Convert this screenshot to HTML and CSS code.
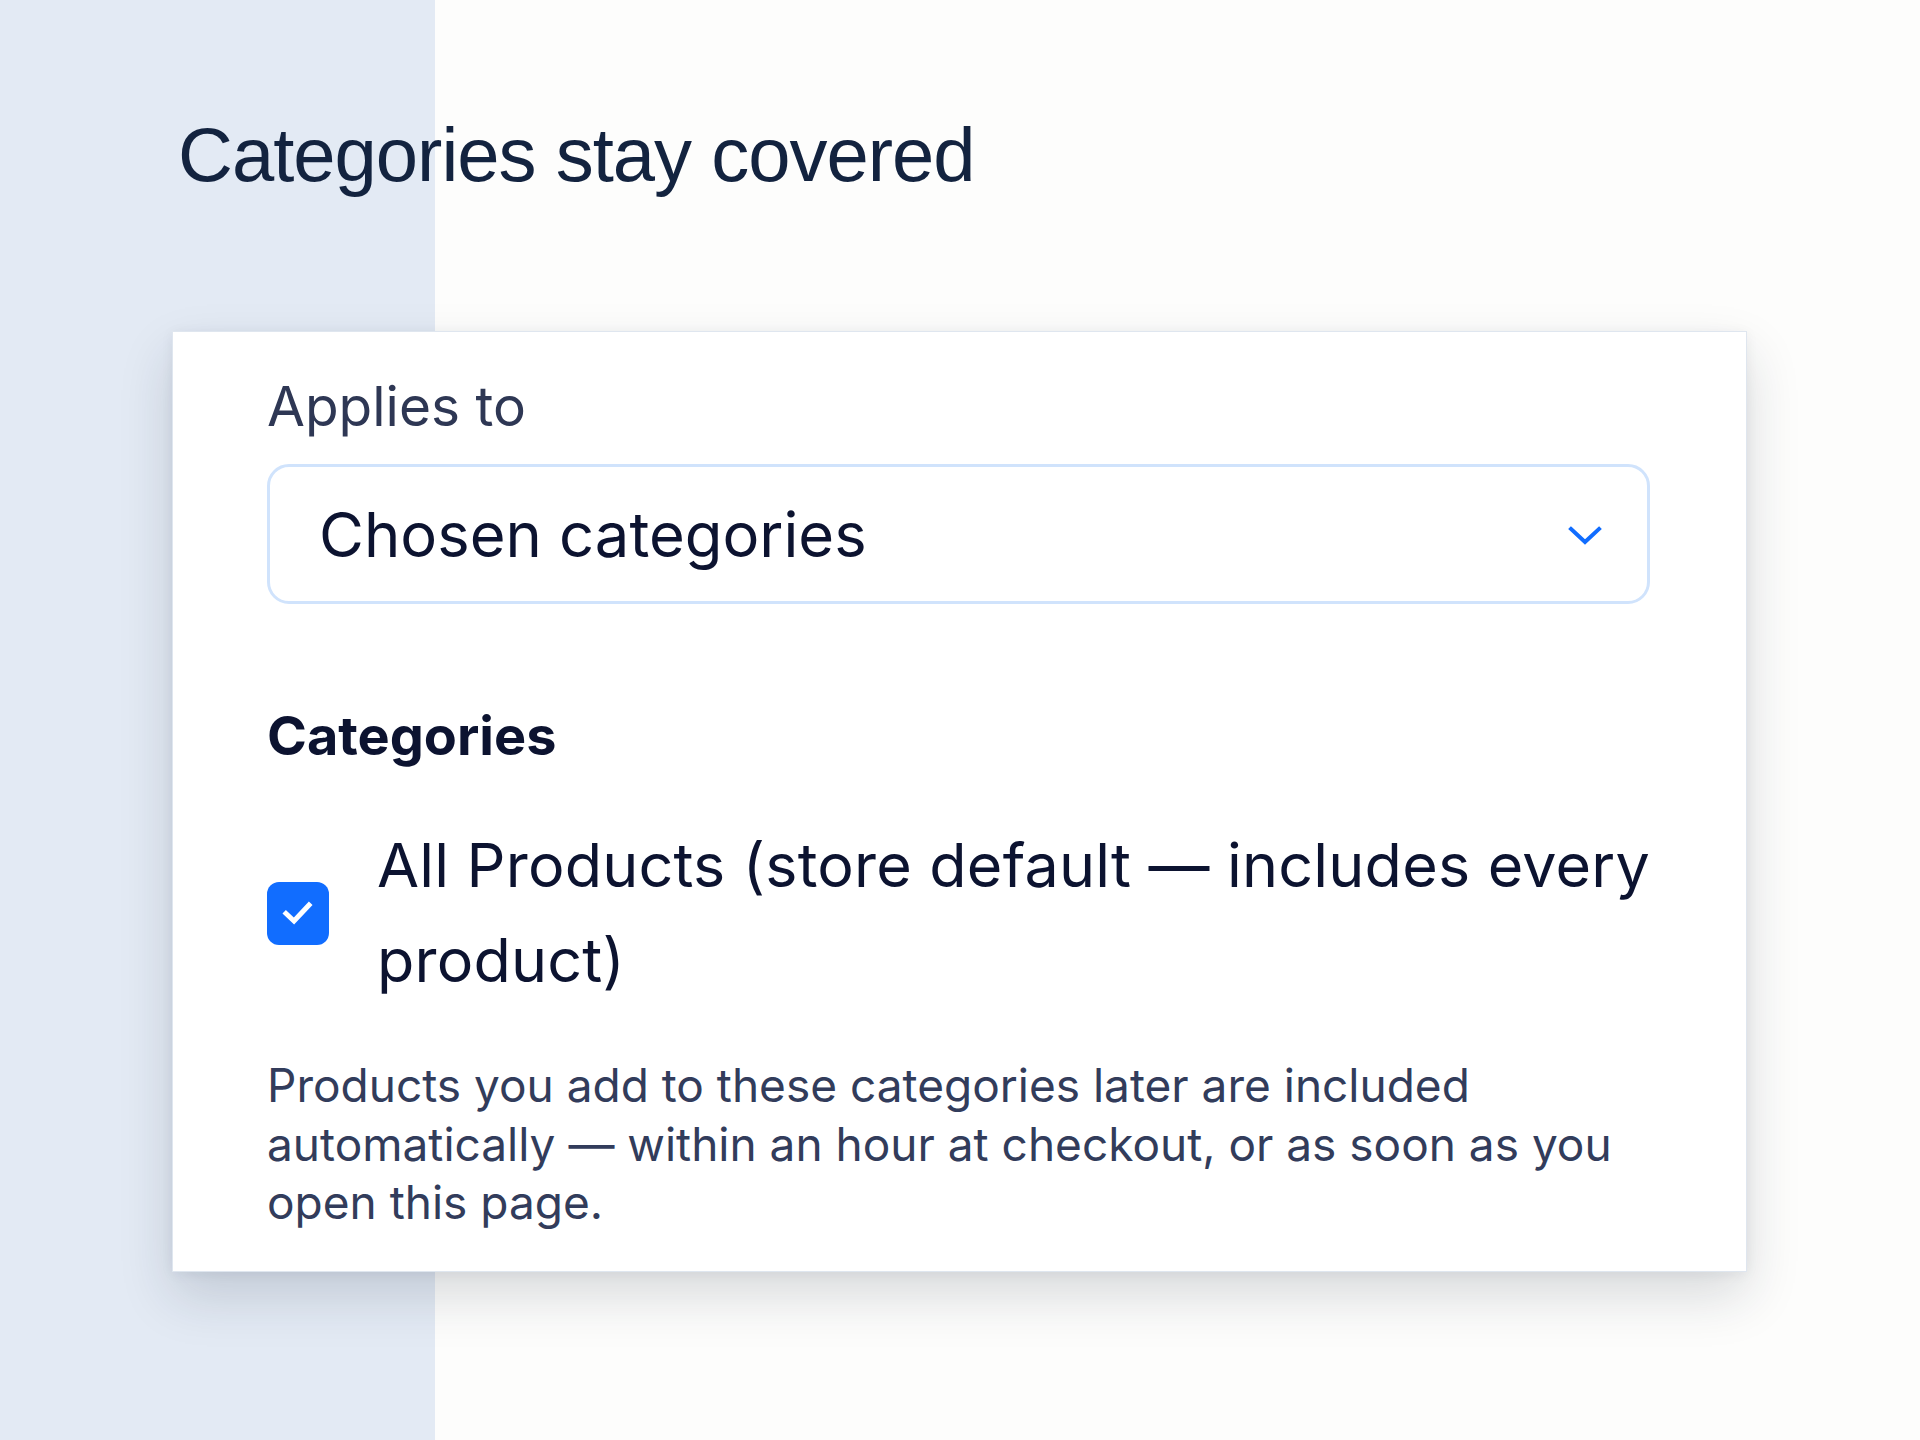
FILE: index.html
```html
<!DOCTYPE html>
<html lang="en">
<head>
<meta charset="utf-8">
<title>Categories stay covered</title>
<link rel="stylesheet" href="styles.css">
</head>
<body>
<div class="page">
  <h1 class="title">Categories stay covered</h1>
  <section class="card">
    <div class="field-label">Applies to</div>
    <div class="select">
      <span class="select-value">Chosen categories</span>
      <svg class="chevron" width="36" height="22" viewBox="0 0 36 22" aria-hidden="true">
        <path d="M4 4 L18 17 L32 4" fill="none" stroke="#116dff" stroke-width="4" stroke-linecap="square" stroke-linejoin="miter"/>
      </svg>
    </div>
    <h2 class="section-title">Categories</h2>
    <div class="option">
      <span class="checkbox">
        <svg width="34" height="28" viewBox="0 0 34 28" aria-hidden="true">
          <path d="M5 14.5 L13 22 L28 6" fill="none" stroke="#ffffff" stroke-width="5" stroke-linecap="square" stroke-linejoin="miter"/>
        </svg>
      </span>
      <span class="option-label">All Products (store default — includes every product)</span>
    </div>
    <p class="note">Products you add to these categories later are included automatically — within an hour at checkout, or as soon as you open this page.</p>
  </section>
</div>
</body>
</html>
```

FILE: styles.css
```css
html, body {
  margin: 0;
  padding: 0;
}

body {
  width: 1920px;
  min-height: 1440px;
  background: linear-gradient(to right, #e3eaf4 0, #e3eaf4 435px, #fdfdfc 435px, #fdfdfc 100%);
  font-family: "Inter", "Noto Sans", sans-serif;
}

.page {
  display: flex;
  flex-direction: column;
  align-items: flex-start;
  padding: 111px 0 0 172px;
}

.title {
  margin: 0 0 133px 6px;
  font-family: "Liberation Sans", Arial, sans-serif;
  font-weight: 400;
  font-size: 76px;
  line-height: 87px;
  letter-spacing: -1px;
  color: #13233f;
}

.card {
  box-sizing: border-box;
  width: 1575px;
  padding: 41px 96px 39px 94px;
  background: #ffffff;
  border: 1px solid #dfe6ef;
  box-shadow: 0 24px 50px rgba(25, 35, 55, 0.16), 0 2px 12px rgba(25, 35, 55, 0.06);
  display: flex;
  flex-direction: column;
}

.field-label {
  font-size: 55px;
  line-height: 66px;
  color: #2e3754;
  margin: 0 0 25px 0;
}

.select {
  box-sizing: border-box;
  height: 140px;
  border: 3px solid #d0e3fc;
  border-radius: 22px;
  display: flex;
  align-items: center;
  justify-content: space-between;
  padding: 0 44px 0 49px;
}

.select-value {
  font-size: 61.5px;
  color: #0c1330;
}

.chevron {
  display: block;
  margin-top: 4px;
}

.section-title {
  margin: 99px 0 0 0;
  font-size: 54px;
  line-height: 66px;
  font-weight: 700;
  color: #0c1330;
}

.option {
  margin: 49px -12px 0 0;
  display: flex;
  align-items: center;
  gap: 48px;
}

.checkbox {
  flex: none;
  width: 62px;
  height: 63px;
  border-radius: 12px;
  background: #116dff;
  display: flex;
  align-items: center;
  justify-content: center;
}

.checkbox svg {
  display: block;
}

.option-label {
  font-size: 61px;
  line-height: 95px;
  letter-spacing: 0.2px;
  color: #0c1330;
}

.note {
  margin: 48px 0 0 0;
  font-size: 46px;
  line-height: 58.5px;
  color: #323c5b;
}
```
